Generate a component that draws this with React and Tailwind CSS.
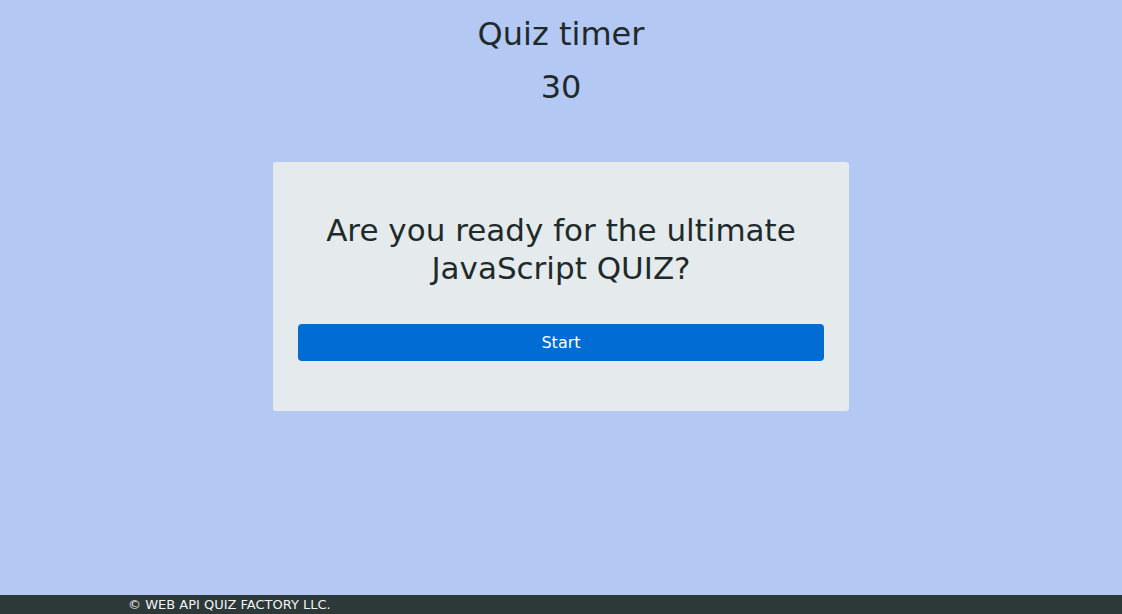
import React from "react";

export default function App() {
  return (
    <div
      className="min-h-screen flex flex-col bg-[#b4c8f4] text-[#1f2a2b]"
      style={{ fontFamily: '"DejaVu Sans", "Noto Sans", sans-serif' }}
    >
      <main className="flex-1 flex flex-col items-center">
        <h1 className="mt-[14px] text-[32px] leading-[40px] font-normal">Quiz timer</h1>
        <div className="mt-[13px] text-[32px] leading-[40px]">30</div>

        <section className="mt-[55px] w-[576px] bg-[#e5ebec] rounded-[3px] px-[25px] pt-[49px] pb-[50px] flex flex-col items-center">
          <h2 className="text-center text-[31px] leading-[38px] font-normal">
            Are you ready for the ultimate
            <br />
            JavaScript QUIZ?
          </h2>
          <button className="mt-[37px] w-full h-[37px] rounded-[4px] bg-[#006cd4] text-white text-[16px] flex items-center justify-center">
            Start
          </button>
        </section>
      </main>

      <footer className="h-[19px] bg-[#2d3839] text-[#f2f4f4] text-[13px] leading-[19px] pl-[128px]">
        © WEB API QUIZ FACTORY LLC.
      </footer>
    </div>
  );
}
